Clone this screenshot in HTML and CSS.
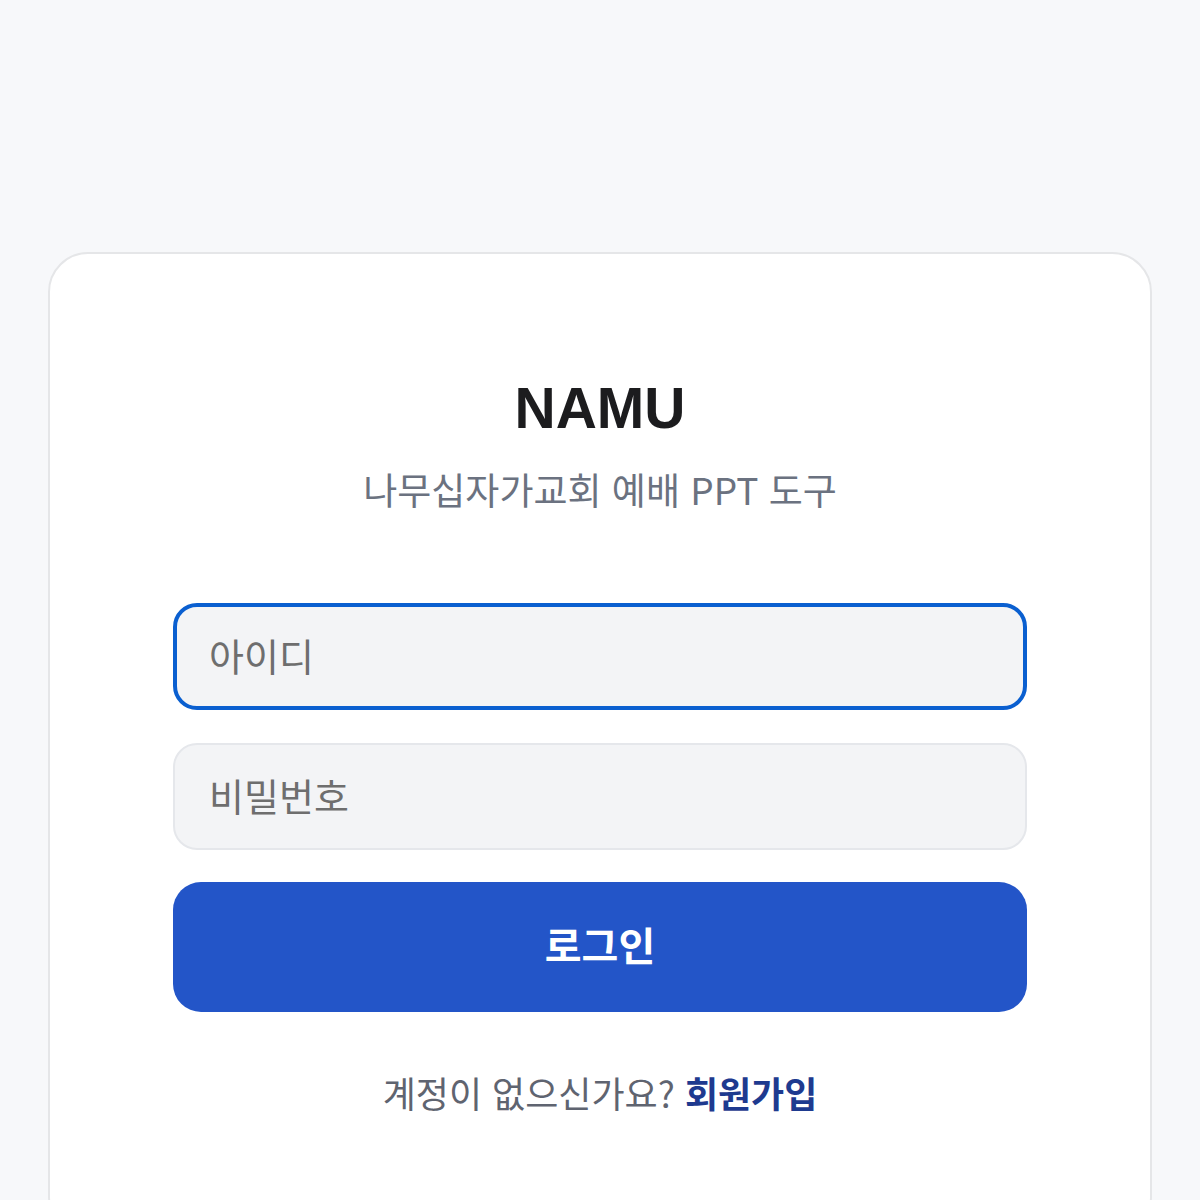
FILE: index.html
```html
<!DOCTYPE html>
<html lang="ko">
<head>
<meta charset="utf-8">
<title>NAMU</title>
<link rel="stylesheet" href="styles.css">
</head>
<body>
<main class="page">
  <section class="card">
    <h1 class="title">NAMU</h1>
    <p class="subtitle">나무십자가교회 예배 PPT 도구</p>
    <form class="form">
      <input class="field field-focused" type="text" placeholder="아이디">
      <input class="field" type="password" placeholder="비밀번호">
      <button class="submit" type="button">로그인</button>
    </form>
    <p class="footer">계정이 없으신가요? <a class="link" href="#">회원가입</a></p>
  </section>
</main>
</body>
</html>
```
FILE: styles.css
```css
html, body {
  margin: 0;
  padding: 0;
  background: #f7f8fa;
  font-family: "Noto Sans CJK KR", "Noto Sans", sans-serif;
}
.page {
  padding: 252px 48px 0;
}
.card {
  background: #ffffff;
  border: 2px solid #e5e6e8;
  border-radius: 40px;
  padding: 121px 123px 120px;
  display: flex;
  flex-direction: column;
  align-items: stretch;
}
.title {
  margin: 0;
  text-align: center;
  font-family: "Liberation Sans", Arial, sans-serif;
  font-weight: 700;
  font-size: 57px;
  line-height: 67px;
  color: #1c1c1e;
}
.subtitle {
  margin: 20px 0 0;
  text-align: center;
  font-size: 37px;
  line-height: 54px;
  color: #6b7280;
}
.form {
  margin-top: 87px;
  display: flex;
  flex-direction: column;
}
.field {
  box-sizing: border-box;
  height: 107px;
  width: 100%;
  border: 2px solid #e5e7eb;
  border-radius: 24px;
  background: #f3f4f6;
  padding: 0 34px 4px;
  font-family: "Noto Sans CJK KR", "Noto Sans", sans-serif;
  font-size: 38px;
  color: #222;
  outline: none;
}
.field + .field {
  margin-top: 33px;
}
.field::placeholder {
  color: #6e6e6e;
}
.field-focused {
  border: 4px solid #0a5fd0;
  padding: 0 32px 4px;
}
.submit {
  margin-top: 32px;
  height: 130px;
  border: none;
  border-radius: 28px;
  background: #2355c8;
  color: #ffffff;
  font-family: "Noto Sans CJK KR", "Noto Sans", sans-serif;
  font-weight: 700;
  font-size: 40px;
  padding: 0 0 6px;
}
.footer {
  margin: 56px 0 0;
  text-align: center;
  font-size: 36px;
  line-height: 48px;
  color: #5f6470;
}
.link {
  color: #1e3a8f;
  font-weight: 700;
  text-decoration: none;
}
```
